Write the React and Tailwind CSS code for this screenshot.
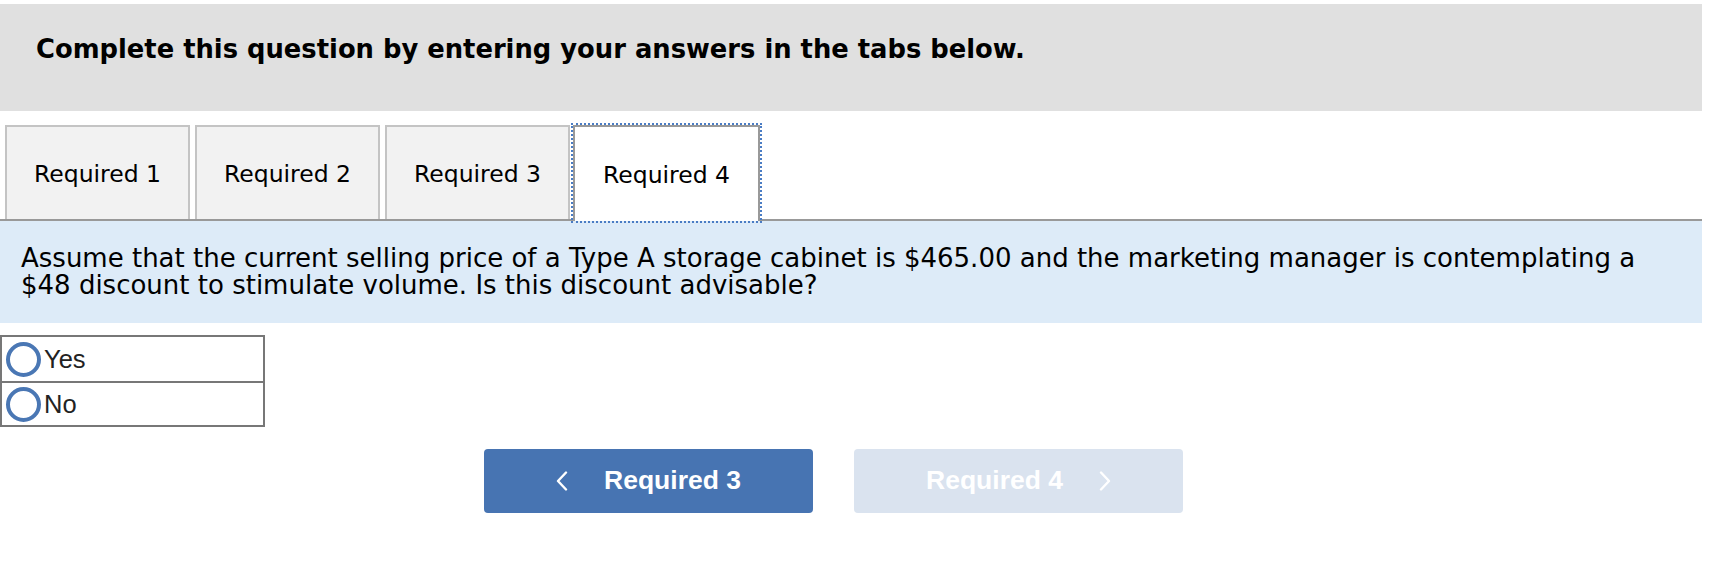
import { useState } from 'react'

const tabs = ['Required 1', 'Required 2', 'Required 3', 'Required 4']

function Chevron({ dir }) {
  return (
    <svg width="12" height="20" viewBox="0 0 12 20" fill="none" stroke="currentColor" strokeWidth="2.4" strokeLinecap="round" strokeLinejoin="round">
      {dir === 'left' ? <polyline points="10,1.5 2,10 10,18.5" /> : <polyline points="2,1.5 10,10 2,18.5" />}
    </svg>
  )
}

function Radio({ label, checked, onSelect, first }) {
  return (
    <label
      className={`flex items-center h-[44px] cursor-pointer ${first ? '' : 'border-t-2 border-[#777]'}`}
      onClick={onSelect}
    >
      <span className="ml-[4px] w-[35px] h-[35px] rounded-full border-4 border-[#4a77b4] flex items-center justify-center shrink-0">
        {checked && <span className="w-[15px] h-[15px] rounded-full bg-[#4a77b4]" />}
      </span>
      <span className="ml-[3px] text-[25.5px] text-[#222] font-['Liberation_Sans',Arial,sans-serif]">{label}</span>
    </label>
  )
}

export default function App() {
  const [active, setActive] = useState(3)
  const [answer, setAnswer] = useState(null)

  return (
    <div className="w-[1702px] bg-white pt-[4px] font-['DejaVu_Sans',Verdana,sans-serif] text-black">
      <div className="h-[107px] bg-[#e0e0e0] pl-[36px] pt-[30px]">
        <h1 className="text-[25.8px] leading-[30px] font-bold">
          Complete this question by entering your answers in the tabs below.
        </h1>
      </div>

      <div className="flex items-end pt-[14px] pl-[5px] border-b-2 border-[#999]">
        {tabs.map((t, i) =>
          i === active ? (
            <button
              key={t}
              onClick={() => setActive(i)}
              className="relative z-10 -mb-[2px] ml-[3px] w-[187px] h-[96px] pt-[3px] bg-white border-2 border-b-0 border-[#999] outline-2 outline-dotted outline-[#4a7cc4] text-[23.5px] text-black"
            >
              {t}
            </button>
          ) : (
            <button
              key={t}
              onClick={() => setActive(i)}
              className={`w-[185px] h-[94px] pt-[4px] bg-[#f2f2f2] border-2 border-b-0 border-[#c4c4c4] text-[23.5px] text-black ${i === 0 ? '' : 'ml-[5px]'}`}
            >
              {t}
            </button>
          )
        )}
      </div>

      <div className="bg-[#ddebf8] pl-[21px] pr-[40px] pt-[24px] pb-[24px] text-[26px] leading-[27px]">
        Assume that the current selling price of a Type A storage cabinet is $465.00 and the marketing manager is contemplating a $48 discount to stimulate volume. Is this discount advisable?
      </div>

      <div className="mt-[12px] w-[265px] border-2 border-[#777]">
        <Radio label="Yes" first checked={answer === 'yes'} onSelect={() => setAnswer('yes')} />
        <Radio label="No" checked={answer === 'no'} onSelect={() => setAnswer('no')} />
      </div>

      <div className="flex gap-[41px] pl-[484px] mt-[22px] pb-[67px] font-['Liberation_Sans',Arial,sans-serif]">
        <button className="w-[329px] h-[64px] rounded-[4px] bg-[#4774b2] text-white flex items-center justify-center gap-[36px]">
          <Chevron dir="left" />
          <span className="text-[26.5px] font-bold">Required 3</span>
        </button>
        <button disabled className="w-[329px] h-[64px] rounded-[4px] bg-[#dae3ef] text-white flex items-center justify-center gap-[36px]">
          <span className="text-[26.5px] font-bold">Required 4</span>
          <Chevron dir="right" />
        </button>
      </div>
    </div>
  )
}
